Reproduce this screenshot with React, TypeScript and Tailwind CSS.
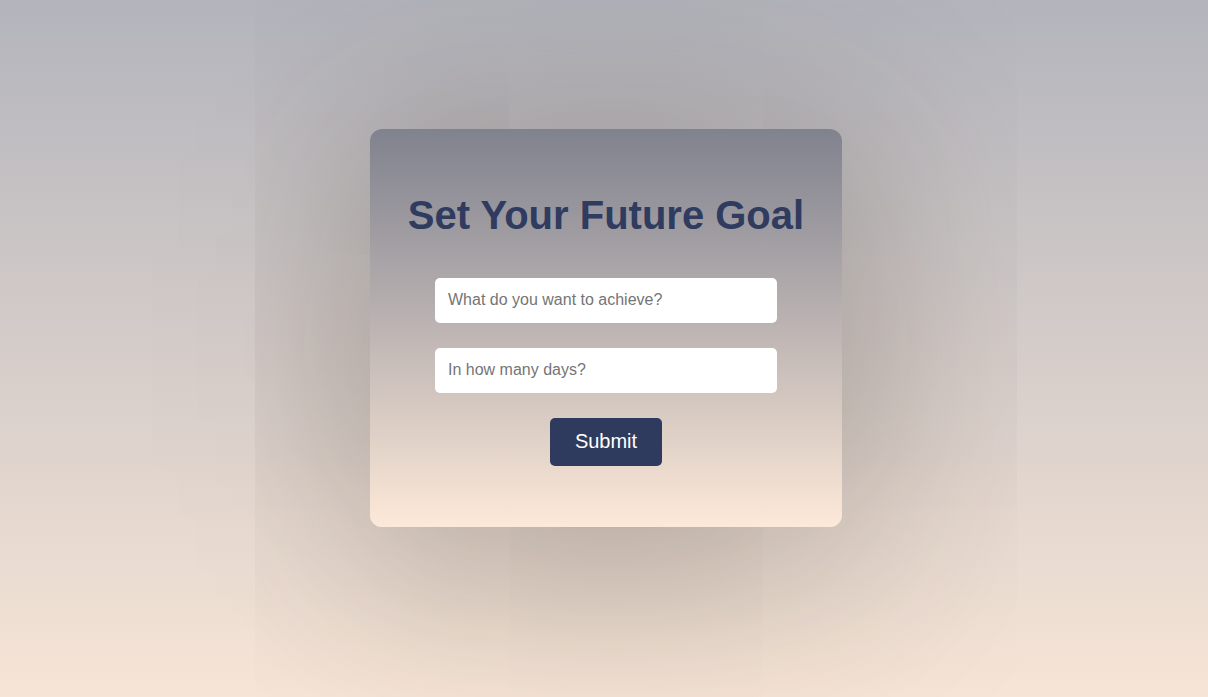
import { useState } from "react";

const App = () => {
    const [goal, setGoal] = useState('');
    const [days, setDays] = useState('');

    return (
        <div className="min-h-screen w-full bg-gradient-to-b from-[#b3b4bc] to-[#f7e5d6] flex justify-center pt-[129px] pl-[4px] font-['Liberation_Sans',Arial,sans-serif]">
            <div className="w-[472px] h-[398px] rounded-xl bg-gradient-to-b from-[#80828e] to-[#fde9d8] shadow-[0_20px_220px_rgba(40,30,20,0.42)] flex flex-col items-center pt-[63px]">
                <h1 className="text-[40px] leading-[46px] font-bold text-[#2f3b5f]">
                    Set Your Future Goal
                </h1>
                <input
                    value={goal}
                    onChange={(e) => setGoal(e.target.value)}
                    placeholder="What do you want to achieve?"
                    className="mt-[40px] w-[342px] h-[45px] bg-white rounded-[5px] px-[13px] pb-[2px] text-[16px] text-[#333] placeholder:text-[#757575] outline-none"
                />
                <input
                    value={days}
                    onChange={(e) => setDays(e.target.value)}
                    placeholder="In how many days?"
                    className="mt-[25px] w-[342px] h-[45px] bg-white rounded-[5px] px-[13px] pb-[2px] text-[16px] text-[#333] placeholder:text-[#757575] outline-none"
                />
                <button className="mt-[25px] w-[112px] h-[48px] bg-[#2f3b5e] text-white text-[20px] pb-[2px] rounded-[5px] cursor-pointer">
                    Submit
                </button>
            </div>
        </div>
    );
};

export default App;
